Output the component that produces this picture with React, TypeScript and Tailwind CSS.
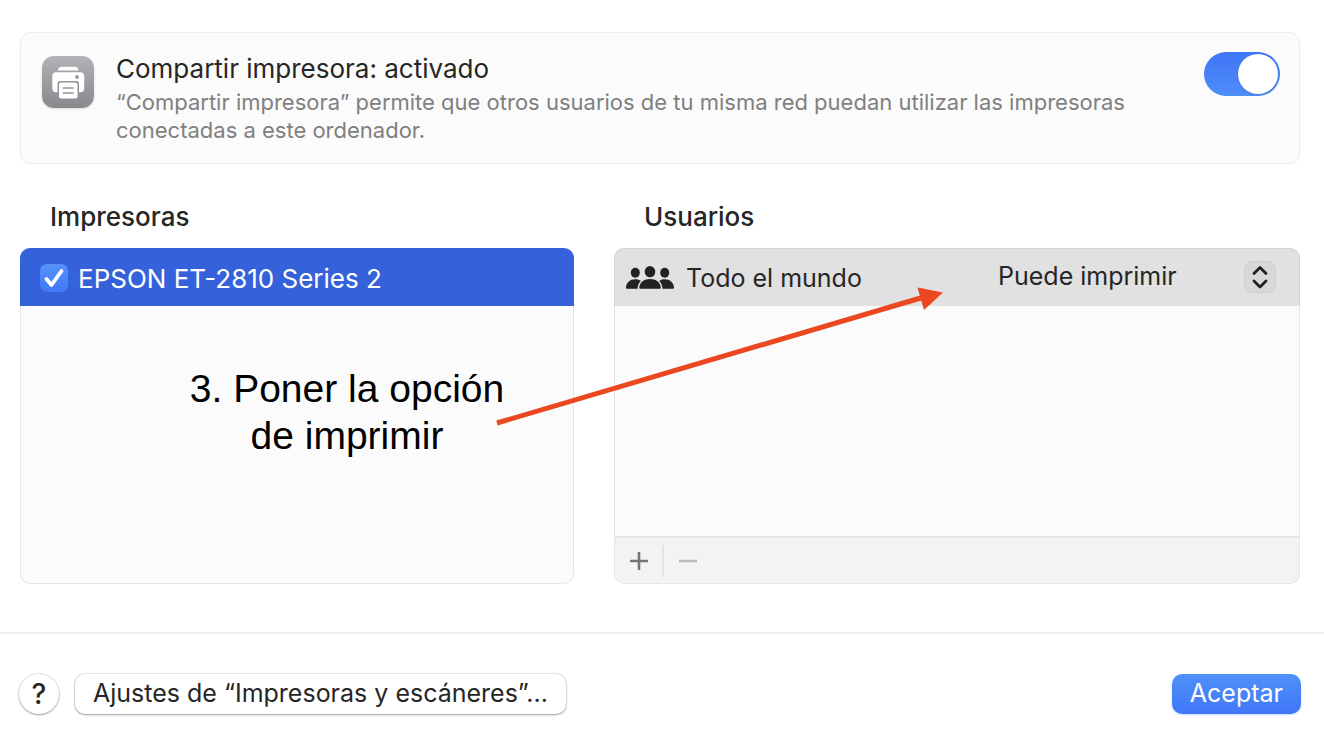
import { useState } from "react";

const PrinterIcon = () => (
  <svg viewBox="0 0 52 52" className="h-full w-full" aria-hidden="true">
    <path d="M16 14.500c0-2.300 1.700-3.800 4-3.800h12.500c2.300 0 4 1.500 4 3.800z" fill="#fff" />
    <path
      d="M14 16.200h24.500c2.300 0 3.700 1.500 3.700 3.800v12.500c0 2.300-1.400 3.700-3.700 3.700H14c-2.300 0-3.700-1.400-3.700-3.700V20c0-2.300 1.400-3.800 3.700-3.800z"
      fill="#fff"
    />
    <circle cx="35" cy="21" r="1.900" fill="#98979d" />
    <path d="M15.500 38V27.500c0-1.600 1-2.500 2.500-2.500h16.500c1.500 0 2.500.9 2.500 2.500V38z" fill="#949399" />
    <rect x="17" y="26.500" width="18.500" height="16" rx="2" fill="#fff" />
    <path d="M21.500 32H31M21.500 37H31" stroke="#949399" strokeWidth="1.700" strokeLinecap="round" />
  </svg>
);

const PeopleIcon = () => (
  <svg viewBox="0 0 48 24" className="h-6 w-12 shrink-0" fill="#222" aria-hidden="true">
    <ellipse cx="9.300" cy="6.700" rx="4.500" ry="5" />
    <ellipse cx="38.700" cy="6.700" rx="4.500" ry="5" />
    <ellipse cx="24" cy="5.700" rx="5.300" ry="5.600" />
    <path d="M0 21.500C.3 16.500 4.200 13.300 9.300 13.300c2.200 0 4 .6 5.500 1.700-2 1.700-3.100 4.300-3.300 7.800H1.300C.4 22.800 0 22.300 0 21.500z" />
    <path d="M48 21.500c-.3-5-4.200-8.200-9.300-8.200-2.200 0-4 .6-5.500 1.700 2 1.700 3.100 4.300 3.300 7.800h10.200c.9 0 1.300-.5 1.300-1.300z" />
    <path d="M13.300 21.300C13.600 16.200 18.200 12.900 24 12.900s10.400 3.300 10.700 8.400c0 1-.5 1.500-1.400 1.500H14.700c-.9 0-1.400-.5-1.400-1.500z" />
  </svg>
);

const App = () => {
  const [shared, setShared] = useState(true);
  const [printer, setPrinter] = useState(true);

  return (
    <main className="bg-white font-['Inter','Liberation_Sans',sans-serif] text-[25px] text-[#262626]">
      <div className="pt-8 pr-6 pb-12 pl-5">
        <section className="flex items-start rounded-[10px] border border-[#ececec] bg-[#fbfbfb] py-[19px] pr-[19px] pl-[21px]">
          <div className="mt-1 h-[52px] w-[52px] shrink-0 rounded-xl bg-linear-to-b from-[#b3b2b7] to-[#89888d] shadow-sm">
            <PrinterIcon />
          </div>
          <div className="ml-[22px] flex-1">
            <label htmlFor="share" className="block pt-px text-[26px] leading-8">
              Compartir impresora: activado
            </label>
            <p className="mt-[3px] max-w-[1040px] text-[22px] leading-7 text-[#808080]">
              “Compartir impresora” permite que otros usuarios de tu misma red
              puedan utilizar las impresoras conectadas a este ordenador.
            </p>
          </div>
          <input
            id="share"
            type="checkbox"
            role="switch"
            checked={shared}
            onChange={() => setShared(!shared)}
            className="flex h-11 w-[76px] shrink-0 appearance-none rounded-full bg-[#d4d4d4] p-0.5 before:h-10 before:w-10 before:rounded-full before:bg-white before:shadow before:content-[''] checked:justify-end checked:bg-linear-to-b checked:from-[#3f76f6] checked:to-[#4f8df8]"
          />
        </section>

        <div className="mt-9 grid grid-cols-[554fr_686fr] gap-x-10 gap-y-[14px]">
          <h2 className="pl-[30px] text-[26px] leading-[34px] font-medium">Impresoras</h2>
          <h2 className="pl-[30px] text-[26px] leading-[34px] font-medium">Usuarios</h2>

          <div className="relative col-span-2 grid grid-cols-subgrid">
            <section className="flex min-h-[336px] flex-col">
              <label className="flex h-[58px] items-center rounded-t-[10px] bg-[#3562da] pt-0.5 pl-5 text-[26px] text-white">
                <span className="grid h-7 w-7 place-items-center">
                  <input
                    type="checkbox"
                    checked={printer}
                    onChange={() => setPrinter(!printer)}
                    className="col-start-1 row-start-1 h-7 w-7 appearance-none rounded-[7px] bg-white checked:bg-linear-to-b checked:from-[#5592f9] checked:to-[#4078f8]"
                  />
                  <svg viewBox="0 0 28 28" className="pointer-events-none col-start-1 row-start-1 h-7 w-7" aria-hidden="true">
                    <path d="M6.500 15l5 6 10-14" fill="none" stroke="#fff" strokeWidth="3.800" strokeLinecap="round" strokeLinejoin="round" />
                  </svg>
                </span>
                <span className="ml-[10px]">EPSON ET-2810 Series 2</span>
              </label>
              <div className="flex-1 rounded-b-[10px] border border-t-0 border-[#e6e6e6] bg-[#fbfbfb]" />
            </section>

            <section className="flex min-h-[336px] flex-col">
              <div className="flex h-[58px] items-center rounded-t-[10px] border border-b-0 border-[#d4d4d4] bg-[#e1e1e1] pr-[23px] pl-[11px]">
                <PeopleIcon />
                <span className="ml-3 flex-1 pt-0.5">Todo el mundo</span>
                <div className="grid w-[278px] items-center pb-0.5">
                  <select
                    aria-label="Permiso"
                    className="col-start-1 row-start-1 w-full appearance-none bg-transparent pb-0.5 leading-8"
                  >
                    <option>Puede imprimir</option>
                    <option>Sin acceso</option>
                  </select>
                  <span className="pointer-events-none col-start-1 row-start-1 h-8 w-8 justify-self-end rounded-lg border border-[#cfcfcf] bg-[#d8d8d8]">
                    <svg viewBox="0 0 30 30" className="h-full w-full" aria-hidden="true">
                      <path d="M9 11.500l6-6 6 6M9 19l6 6 6-6" fill="none" stroke="#1f1f1f" strokeWidth="2.800" strokeLinecap="round" strokeLinejoin="round" />
                    </svg>
                  </span>
                </div>
              </div>
              <div className="flex-1 border-x border-[#e6e6e6] bg-[#fbfbfb]" />
              <div className="flex h-12 items-center rounded-b-[10px] border border-t-2 border-[#e6e6e6] bg-[#f3f3f3]">
                <button aria-label="Añadir" className="flex h-8 w-[47px] items-center justify-center">
                  <svg viewBox="0 0 18 18" className="h-[18px] w-[18px]" aria-hidden="true">
                    <path d="M9 1v16M1 9h16" stroke="#757575" strokeWidth="2.600" strokeLinecap="round" />
                  </svg>
                </button>
                <span className="h-8 w-0.5 bg-[#e3e3e3]" />
                <button aria-label="Eliminar" disabled className="flex h-8 w-12 items-center justify-center">
                  <svg viewBox="0 0 18 18" className="h-[18px] w-[18px]" aria-hidden="true">
                    <path d="M1 9h16" stroke="#b9b9b9" strokeWidth="2.600" strokeLinecap="round" />
                  </svg>
                </button>
              </div>
            </section>

            {/* instruction and arrow drawn on top of both lists */}
            <p className="pointer-events-none absolute top-[117px] left-[162px] w-[330px] text-center font-['Liberation_Sans',Arial,sans-serif] text-[39px] leading-[47px] text-black">
              3. Poner la opción
              <br />
              de imprimir
            </p>
            <svg viewBox="0 0 1280 336" className="pointer-events-none absolute inset-0 h-full w-full" aria-hidden="true">
              <path d="M477 175L904 49" stroke="#eb4720" strokeWidth="5" />
              <path d="M897.500 39.500L923 44.500 904 62z" fill="#eb4720" />
            </svg>
          </div>
        </div>
      </div>

      <footer className="flex items-center border-t-2 border-[#f0f0f0] pt-10 pr-[23px] pb-8 pl-[19px]">
        <button
          aria-label="Ayuda"
          className="h-10 w-10 rounded-full bg-white text-[28px] leading-10 font-medium shadow-[0_0_1px_1px_#0000001a,0_1px_2px_#0000004d]"
        >
          ?
        </button>
        <button className="ml-4 h-10 rounded-[10px] bg-white px-[18px] pb-0.5 leading-[38px] shadow-[0_0_1px_1px_#0000001a,0_1px_2px_#0000004d]">
          Ajustes de “Impresoras y escáneres”...
        </button>
        <button className="ml-auto h-10 rounded-[10px] bg-linear-to-b from-[#5090f9] to-[#4077f8] px-[18px] pb-0.5 leading-[38px] text-white shadow-[0_1px_2px_#4077f84d]">
          Aceptar
        </button>
      </footer>
    </main>
  );
};

export default App;
